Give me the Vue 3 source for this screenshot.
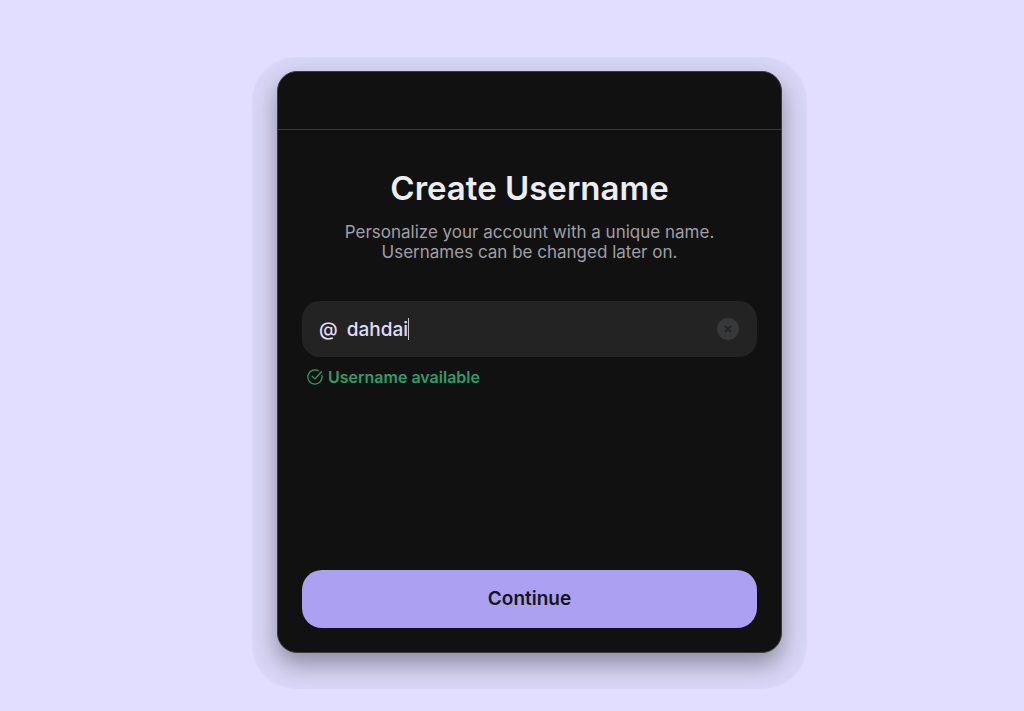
<script setup>
import { ref } from 'vue'

const username = ref('dahdai')
</script>

<template>
  <main class="page">
    <form class="card" @submit.prevent>
      <header class="bar"></header>
      <div class="body">
        <h1 class="title">Create Username</h1>
        <p class="lead">
          Personalize your account with a unique name.<br />
          Usernames can be changed later on.
        </p>
        <div class="field">
          <label class="at" for="username">@</label>
          <div class="entry">
            <input id="username" v-model="username" class="input" type="text" autocomplete="off" spellcheck="false" />
            <span class="caret"></span>
          </div>
          <button class="clear" type="button" aria-label="Clear username" @click="username = ''">
            <svg viewBox="0 0 22 22" width="22" height="22" aria-hidden="true">
              <circle cx="11" cy="11" r="11" fill="#36383a" />
              <path d="M7.8 7.8l6.4 6.4M14.2 7.8l-6.4 6.4" stroke="#232424" stroke-width="1.8" />
            </svg>
          </button>
        </div>
        <p class="status">
          <svg viewBox="0 0 16 16" width="16" height="16" fill="none" stroke="#2f9c69" stroke-width="1.3" stroke-linecap="round" stroke-linejoin="round" aria-hidden="true">
            <path d="M14.9 6.7A7.1 7.1 0 1 1 11.4 1.8" />
            <path d="M5.2 7.3l2.7 2.6 6.6-7.2" />
          </svg>
          <span>Username available</span>
        </p>
        <button class="submit" type="submit">Continue</button>
      </div>
    </form>
  </main>
</template>

<style>
body {
  margin: 0;
  background: #e1deff;
}
</style>

<style scoped>
.page {
  box-sizing: border-box;
  min-height: 100vh;
  padding: 71px 16px 58px 51px;
  display: flex;
  justify-content: center;
  font-family: Inter, "Liberation Sans", sans-serif;
}
.card {
  box-sizing: border-box;
  width: 100%;
  max-width: 505px;
  display: flex;
  flex-direction: column;
  border: 1px solid #3a3a42;
  border-radius: 20px;
  background: #111;
  box-shadow:
    0 11px 24px rgba(0, 0, 0, 0.36),
    0 11px 1px 25px rgba(0, 0, 0, 0.03);
}
.bar {
  height: 57px;
  border-bottom: 1px solid #393939;
}
.body {
  flex: 1;
  display: flex;
  flex-direction: column;
  padding: 36px 24px 24px;
}
.title {
  margin: 0;
  font-size: 33px;
  line-height: 44px;
  font-weight: 600;
  text-align: center;
  color: #ededef;
}
.lead {
  margin: 12px 0 39px;
  font-size: 17px;
  line-height: 20px;
  text-align: center;
  color: #a09fa6;
}
.field {
  display: flex;
  align-items: center;
  height: 56px;
  padding: 0 18px 0 17px;
  border-radius: 18px;
  background: #232323;
  font-size: 19px;
  font-weight: 500;
  color: #e2ddfa;
}
.entry {
  flex: 1;
  min-width: 0;
  display: flex;
  align-items: center;
  padding-left: 9px;
}
.input {
  field-sizing: content;
  min-width: 0;
  padding: 0;
  border: 0;
  outline: 0;
  background: none;
  font: inherit;
  color: inherit;
}
.caret {
  width: 1px;
  height: 22px;
  background: #c9c8d0;
}
.clear {
  display: flex;
  padding: 0;
  border: 0;
  background: none;
}
.status {
  display: flex;
  align-items: center;
  gap: 5px;
  margin: 10px 5px;
  font-size: 16px;
  line-height: 20px;
  font-weight: 600;
  color: #2f9c69;
}
.submit {
  height: 58px;
  margin-top: auto;
  padding: 0 0 2px;
  border: 0;
  border-radius: 20px;
  background: #aba0f1;
  font: inherit;
  font-size: 19px;
  font-weight: 600;
  color: #151718;
}
</style>
